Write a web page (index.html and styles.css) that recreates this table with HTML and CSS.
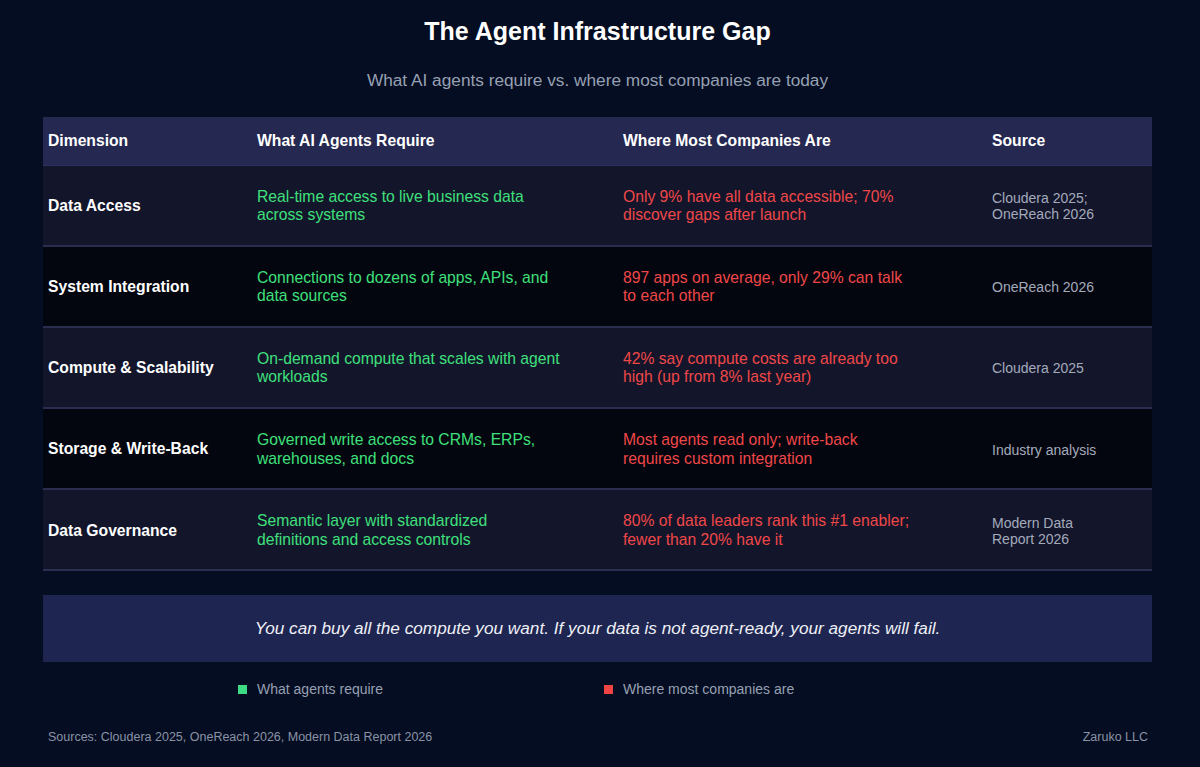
FILE: index.html
```html
<!DOCTYPE html>
<html lang="en">
<head>
<meta charset="utf-8">
<title>The Agent Infrastructure Gap</title>
<link rel="stylesheet" href="styles.css">
</head>
<body>
<main class="page">
  <h1 class="title">The Agent Infrastructure Gap</h1>
  <p class="subtitle">What AI agents require vs. where most companies are today</p>

  <table class="gap-table">
    <colgroup>
      <col class="c-dim">
      <col class="c-req">
      <col class="c-now">
      <col class="c-src">
    </colgroup>
    <thead>
      <tr>
        <th>Dimension</th>
        <th>What AI Agents Require</th>
        <th>Where Most Companies Are</th>
        <th>Source</th>
      </tr>
    </thead>
    <tbody>
      <tr class="odd">
        <td class="dim">Data Access</td>
        <td><div class="req">Real-time access to live business data across systems</div></td>
        <td><div class="now">Only 9% have all data accessible; 70% discover gaps after launch</div></td>
        <td><div class="src">Cloudera 2025; OneReach 2026</div></td>
      </tr>
      <tr class="even">
        <td class="dim">System Integration</td>
        <td><div class="req">Connections to dozens of apps, APIs, and data sources</div></td>
        <td><div class="now">897 apps on average, only 29% can talk to each other</div></td>
        <td><div class="src">OneReach 2026</div></td>
      </tr>
      <tr class="odd">
        <td class="dim">Compute &amp; Scalability</td>
        <td><div class="req">On-demand compute that scales with agent workloads</div></td>
        <td><div class="now">42% say compute costs are already too high (up from 8% last year)</div></td>
        <td><div class="src">Cloudera 2025</div></td>
      </tr>
      <tr class="even">
        <td class="dim">Storage &amp; Write-Back</td>
        <td><div class="req">Governed write access to CRMs, ERPs, warehouses, and docs</div></td>
        <td><div class="now">Most agents read only; write-back requires custom integration</div></td>
        <td><div class="src">Industry analysis</div></td>
      </tr>
      <tr class="odd">
        <td class="dim">Data Governance</td>
        <td><div class="req">Semantic layer with standardized definitions and access controls</div></td>
        <td><div class="now">80% of data leaders rank this #1 enabler; fewer than 20% have it</div></td>
        <td><div class="src">Modern Data Report 2026</div></td>
      </tr>
    </tbody>
  </table>

  <div class="callout">You can buy all the compute you want. If your data is not agent-ready, your agents will fail.</div>

  <div class="legend">
    <div class="legend-item legend-req"><span class="swatch swatch-green"></span>What agents require</div>
    <div class="legend-item legend-now"><span class="swatch swatch-red"></span>Where most companies are</div>
  </div>

  <footer class="footer">
    <span>Sources: Cloudera 2025, OneReach 2026, Modern Data Report 2026</span>
    <span>Zaruko LLC</span>
  </footer>
</main>
</body>
</html>
```

FILE: styles.css
```css
* { box-sizing: border-box; }

html, body {
  margin: 0;
  padding: 0;
  background: #040d21;
}

body {
  font-family: "Liberation Sans", Arial, Helvetica, sans-serif;
  color: #ffffff;
  width: 1200px;
  height: 767px;
  overflow: hidden;
}

.page {
  width: 1109px;
  margin-left: 43px;
  padding-top: 16px;
  display: flex;
  flex-direction: column;
}

.title {
  margin: 0;
  text-align: center;
  font-size: 25px;
  line-height: 30px;
  font-weight: 700;
  color: #ffffff;
}

.subtitle {
  margin: 24px 0 0;
  text-align: center;
  font-size: 17.25px;
  line-height: 20px;
  color: #97a0b3;
}

.gap-table {
  margin-top: 27px;
  width: 1109px;
  border-collapse: collapse;
  table-layout: fixed;
}

.c-dim { width: 209px; }
.c-req { width: 366px; }
.c-now { width: 369px; }
.c-src { width: 165px; }

.gap-table th {
  background: #252850;
  height: 48px;
  padding: 0 5px;
  text-align: left;
  font-size: 15.7px;
  font-weight: 700;
  color: #ffffff;
  border-bottom: 1px solid #2e3160;
}

.gap-table td {
  padding: 22px 5px 20px;
  vertical-align: middle;
  font-size: 15.7px;
  line-height: 18.6px;
  border-bottom: 2px solid #2a2c50;
}

.gap-table tr.odd td { background: #13152b; }
.gap-table tr.even td { background: #03050f; }

.dim {
  font-weight: 700;
  color: #ffffff;
}

.req {
  color: #3fe07b;
  max-width: 305px;
}

.now {
  color: #f04848;
  max-width: 292px;
}

.src {
  font-size: 14px;
  line-height: 16px;
  color: #a3abbb;
  max-width: 125px;
}

.callout {
  margin-top: 24px;
  height: 67px;
  background: #1e2550;
  display: flex;
  align-items: center;
  justify-content: center;
  font-style: italic;
  font-size: 17.2px;
  color: #eef0f6;
}

.legend {
  margin-top: 19px;
  display: grid;
  grid-template-columns: 209px 366px 369px 165px;
  font-size: 14px;
  line-height: 16px;
  color: #97a0b3;
}

.legend-item {
  display: flex;
  align-items: center;
  gap: 10px;
  margin-left: -14px;
}

.legend-req { grid-column: 2; }
.legend-now { grid-column: 3; }

.swatch {
  width: 9px;
  height: 9px;
  display: inline-block;
}

.swatch-green { background: #3ddc84; }
.swatch-red { background: #ef4444; }

.footer {
  margin-top: 33px;
  padding: 0 4px 0 5px;
  display: flex;
  justify-content: space-between;
  font-size: 12.5px;
  line-height: 15px;
  color: #8a93a6;
}
```
